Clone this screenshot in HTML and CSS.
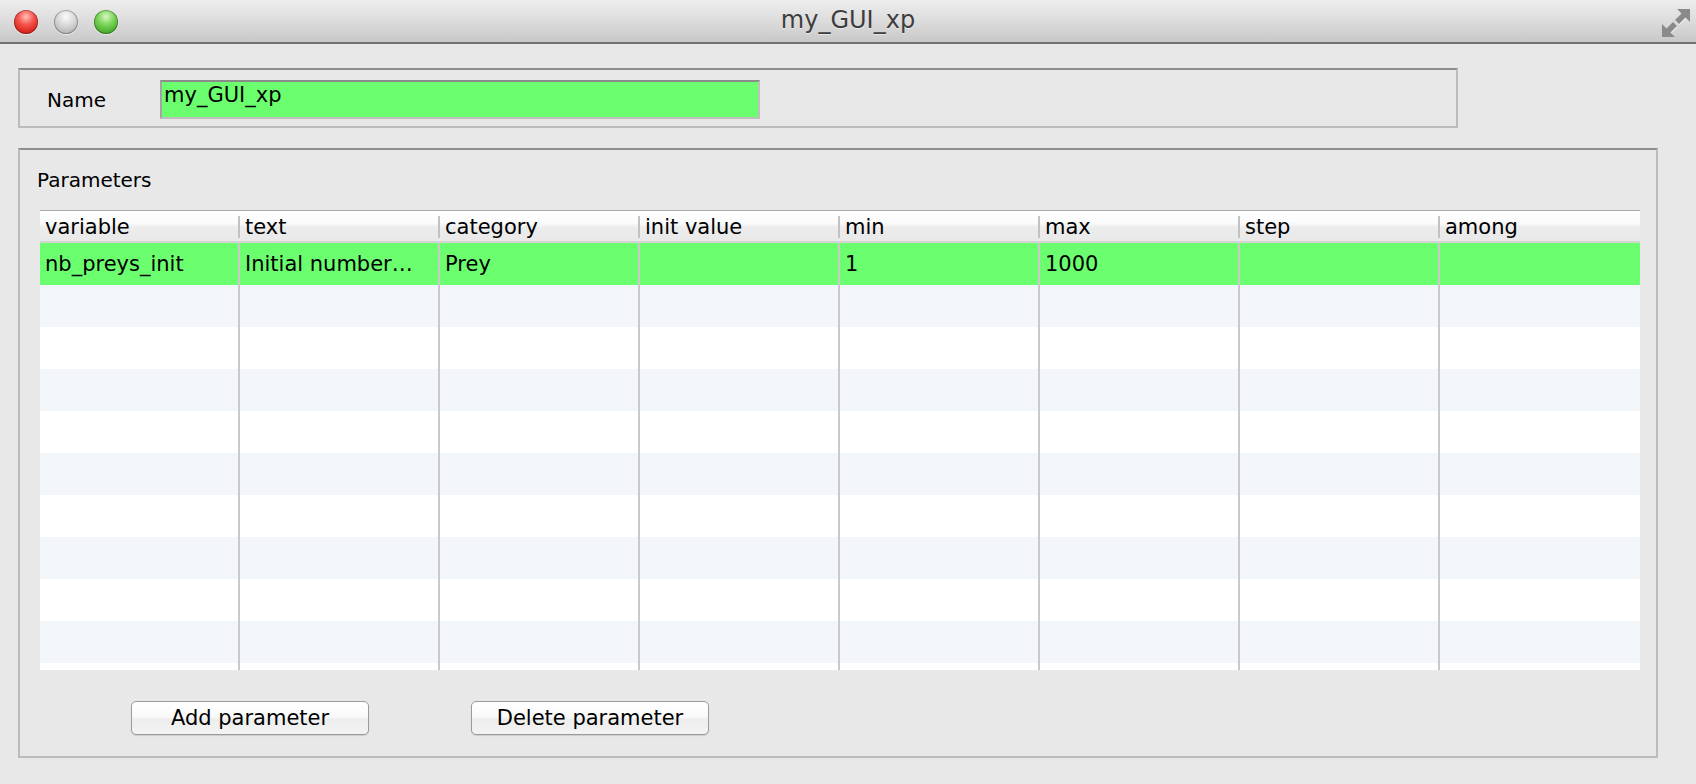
FILE: index.html
```html
<!DOCTYPE html>
<html>
<head>
<meta charset="utf-8">
<link rel="stylesheet" href="styles.css">
</head>
<body>
<div class="window">
  <div class="titlebar">
    <div class="lights">
      <span class="light red"></span>
      <span class="light gray"></span>
      <span class="light green"></span>
    </div>
    <div class="title">my_GUI_xp</div>
    <svg class="zoom-icon" width="28" height="28" viewBox="0 0 28 28">
      <g transform="translate(0.6,1)" fill="#ffffff" opacity="0.7">
        <path d="M28 0 L28 13 L23.5 8.5 L17 15 L13 11 L19.5 4.5 L15 0 Z"/>
        <path d="M0 28 L0 15 L4.5 19.5 L11 13 L15 17 L8.5 23.5 L13 28 Z"/>
      </g>
      <g fill="#8a8a8a">
        <path d="M28 0 L28 13 L23.5 8.5 L17 15 L13 11 L19.5 4.5 L15 0 Z"/>
        <path d="M0 28 L0 15 L4.5 19.5 L11 13 L15 17 L8.5 23.5 L13 28 Z"/>
      </g>
    </svg>
  </div>
  <div class="content">
    <div class="name-panel">
      <span class="name-label">Name</span>
      <div class="field">my_GUI_xp</div>
    </div>
    <div class="params-panel">
      <div class="params-title">Parameters</div>
      <div class="table">
        <div class="thead">
          <div class="th">variable</div>
          <div class="th">text</div>
          <div class="th">category</div>
          <div class="th">init value</div>
          <div class="th">min</div>
          <div class="th">max</div>
          <div class="th">step</div>
          <div class="th">among</div>
        </div>
        <div class="tbody">
          <div class="tr selected">
            <div class="td">nb_preys_init</div>
            <div class="td">Initial number…</div>
            <div class="td">Prey</div>
            <div class="td"></div>
            <div class="td">1</div>
            <div class="td">1000</div>
            <div class="td"></div>
            <div class="td"></div>
          </div>
          <div class="tr alt"><div class="td"></div><div class="td"></div><div class="td"></div><div class="td"></div><div class="td"></div><div class="td"></div><div class="td"></div><div class="td"></div></div>
          <div class="tr"><div class="td"></div><div class="td"></div><div class="td"></div><div class="td"></div><div class="td"></div><div class="td"></div><div class="td"></div><div class="td"></div></div>
          <div class="tr alt"><div class="td"></div><div class="td"></div><div class="td"></div><div class="td"></div><div class="td"></div><div class="td"></div><div class="td"></div><div class="td"></div></div>
          <div class="tr"><div class="td"></div><div class="td"></div><div class="td"></div><div class="td"></div><div class="td"></div><div class="td"></div><div class="td"></div><div class="td"></div></div>
          <div class="tr alt"><div class="td"></div><div class="td"></div><div class="td"></div><div class="td"></div><div class="td"></div><div class="td"></div><div class="td"></div><div class="td"></div></div>
          <div class="tr"><div class="td"></div><div class="td"></div><div class="td"></div><div class="td"></div><div class="td"></div><div class="td"></div><div class="td"></div><div class="td"></div></div>
          <div class="tr alt"><div class="td"></div><div class="td"></div><div class="td"></div><div class="td"></div><div class="td"></div><div class="td"></div><div class="td"></div><div class="td"></div></div>
          <div class="tr"><div class="td"></div><div class="td"></div><div class="td"></div><div class="td"></div><div class="td"></div><div class="td"></div><div class="td"></div><div class="td"></div></div>
          <div class="tr alt"><div class="td"></div><div class="td"></div><div class="td"></div><div class="td"></div><div class="td"></div><div class="td"></div><div class="td"></div><div class="td"></div></div>
          <div class="tr"><div class="td"></div><div class="td"></div><div class="td"></div><div class="td"></div><div class="td"></div><div class="td"></div><div class="td"></div><div class="td"></div></div>
        </div>
      </div>
      <div class="buttons">
        <button class="btn">Add parameter</button>
        <button class="btn">Delete parameter</button>
      </div>
    </div>
  </div>
</div>
</body>
</html>
```

FILE: styles.css
```css
* { box-sizing: border-box; }

html, body {
  margin: 0;
  padding: 0;
  background: #e8e8e8;
}

body {
  font-family: "DejaVu Sans", "Liberation Sans", sans-serif;
  font-size: 20px;
  color: #000;
  width: 1696px;
  height: 784px;
  overflow: hidden;
}

.window {
  width: 1696px;
  height: 784px;
  background: #e8e8e8;
}

/* ---------- title bar ---------- */
.titlebar {
  height: 44px;
  display: grid;
  grid-template-columns: 1fr auto 1fr;
  background: linear-gradient(#eeeeee, #dcdcdc 50%, #c8c8c8);
  border-bottom: 2px solid #727272;
}

.lights {
  display: flex;
  align-items: center;
  gap: 16px;
  padding-left: 14px;
  padding-top: 1px;
}

.light {
  width: 24px;
  height: 24px;
  border-radius: 50%;
  display: block;
  box-shadow: 0 1px 1px rgba(255,255,255,0.6), inset 0 0 0 1px rgba(0,0,0,0.28);
}

.light.red {
  background: radial-gradient(circle at 50% 28%, #ffc0b8 0%, #f5554c 38%, #d6261e 75%, #b01a14 100%);
}

.light.gray {
  background: radial-gradient(circle at 50% 28%, #fbfbfb 0%, #d6d6d6 45%, #b4b4b4 80%, #9d9d9d 100%);
}

.light.green {
  background: radial-gradient(circle at 50% 28%, #d6f7c2 0%, #79d457 40%, #46a82c 78%, #2f8a1c 100%);
}

.title {
  font-size: 24px;
  color: #3d3d3d;
  padding-top: 6px;
  line-height: 28px;
  text-shadow: 0 1px 0 rgba(255,255,255,0.5);
}

.zoom-icon {
  justify-self: end;
  margin-top: 9px;
  margin-right: 6px;
  display: block;
}

/* ---------- content ---------- */
.content {
  padding: 24px 0 0 18px;
}

.name-panel {
  width: 1440px;
  height: 60px;
  border: 2px solid #bcbcbc;
  border-top-color: #8d8d8d;
  display: flex;
  align-items: flex-start;
  padding: 10px 0 0 27px;
}

.name-label {
  width: 113px;
  line-height: 23px;
  margin-top: 9px;
}

.field {
  width: 600px;
  height: 39px;
  background: #6bfe6f;
  border: 2px solid #bebebe;
  border-top-color: #8b8b8b;
  border-left-color: #a3a3a3;
  padding: 2px 0 0 2px;
  font-size: 21px;
  line-height: 23px;
}

.params-panel {
  margin-top: 20px;
  width: 1640px;
  height: 610px;
  border: 2px solid #bcbcbc;
  border-top-color: #8e8e8e;
  padding: 19px 16px 0 20px;
}

.params-title {
  line-height: 23px;
  margin-left: -3px;
}

.table {
  margin-top: 18px;
  width: 1600px;
  background: #fff;
  font-size: 21px;
}

.thead {
  display: grid;
  grid-template-columns: 198px repeat(6, 200px) 202px;
  border-top: 1px solid #a9a9a9;
  border-bottom: 2px solid #d3d3d3;
  padding: 5px 0 3px 0;
  height: 33px;
  background: linear-gradient(#ffffff 0%, #fbfbfb 40%, #ececec 55%, #e9e9e9 100%);
}

.th {
  line-height: 22px;
  height: 22px;
  padding-left: 5px;
  border-left: 2px solid #c2c2c2;
  white-space: nowrap;
  overflow: hidden;
}

.th:first-child {
  border-left: none;
}

.tbody {
  height: 427px;
  overflow: hidden;
}

.tr {
  display: grid;
  grid-template-columns: 198px repeat(6, 200px) 202px;
  height: 42px;
  background: #ffffff;
}

.tr.alt {
  background: #f2f5fa;
}

.tr.selected {
  background: #6bfe6f;
}

.td {
  line-height: 42px;
  height: 42px;
  padding-left: 5px;
  border-left: 2px solid #c9c9c9;
  white-space: nowrap;
  overflow: hidden;
}

.td:first-child {
  border-left: none;
}

/* ---------- buttons ---------- */
.buttons {
  display: flex;
  gap: 102px;
  padding-left: 91px;
  margin-top: 31px;
}

.btn {
  width: 238px;
  height: 34px;
  font-family: "DejaVu Sans", "Liberation Sans", sans-serif;
  font-size: 21px;
  color: #000;
  border: 1px solid #9a9a9a;
  border-radius: 5px;
  background: linear-gradient(#ffffff 0%, #fafafa 45%, #ededed 55%, #f3f3f3 100%);
  box-shadow: 0 1px 1px rgba(0,0,0,0.12);
  padding: 0;
  line-height: 30px;
}
```
